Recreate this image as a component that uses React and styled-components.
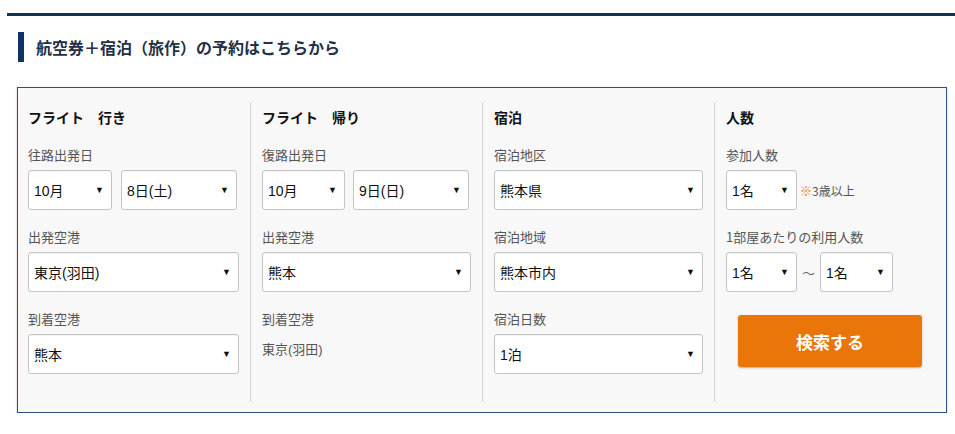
import React from "react";
import styled, { createGlobalStyle } from "styled-components";

const Global = createGlobalStyle`
  html, body { margin: 0; padding: 0; background: #fff; }
  body { font-family: "Liberation Sans", "Noto Sans CJK JP", sans-serif; color: #222; }
`;

const Page = styled.div`
  width: 955px;
  padding-top: 13px;
`;

const TopBar = styled.div`
  margin-left: 7px;
  height: 3px;
  background: #0e3466;
`;

const Heading = styled.h2`
  margin: 16px 0 0 18px;
  border-left: 6px solid #0e3466;
  padding-left: 12px;
  height: 30px;
  line-height: 30px;
  font-size: 16px;
  font-weight: bold;
  color: #233046;
  font-family: "Noto Sans CJK JP", sans-serif;
`;

const Panel = styled.div`
  margin: 25px 0 0 17px;
  width: 928px;
  border: 1px solid #2d5081;
  background: #f8f8f8;
  padding: 14px 0 10px;
  box-shadow: 0 1px 2px rgba(0, 0, 0, 0.25);
  display: grid;
  grid-template-columns: repeat(4, 232px);
`;

const Column = styled.div`
  padding: 6px 11px 28px ${(p) => (p.$first ? "10px" : "11px")};
  border-left: ${(p) => (p.$first ? "none" : "1px solid #d3d3d3")};
  display: flex;
  flex-direction: column;
`;

const Title = styled.div`
  font-family: "Noto Sans CJK JP", sans-serif;
  font-size: 14px;
  font-weight: bold;
  line-height: 18px;
  color: #111;
  margin-bottom: 20px;
`;

const Label = styled.div`
  font-family: "Noto Sans CJK JP", sans-serif;
  font-size: 13px;
  line-height: 18px;
  color: #555;
  margin-bottom: 6px;
  margin-top: ${(p) => (p.$gap ? "18px" : "0")};
`;

const Row = styled.div`
  display: flex;
  align-items: center;
  gap: ${(p) => p.$gap || "9px"};
`;

const Select = styled.div`
  box-sizing: border-box;
  width: ${(p) => p.$w || "100%"};
  height: 40px;
  border: 1px solid #c4c4c4;
  border-radius: 3px;
  background: #fff;
  box-shadow: inset 0 1px 1px rgba(0, 0, 0, 0.04);
  display: flex;
  align-items: center;
  justify-content: space-between;
  padding: 0 7px 0 5px;
  font-family: "Liberation Sans", "Noto Sans CJK JP", sans-serif;
  font-size: 14px;
  color: #111;
`;

const Arrow = styled.span`
  font-size: 9px;
  color: #111;
  line-height: 1;
`;

const Note = styled.span`
  font-family: "Noto Sans CJK JP", sans-serif;
  font-size: 12px;
  color: #555;
  margin-left: -6px;
  & > em { font-style: normal; color: #e8790f; }
`;

const Tilde = styled.span`
  font-size: 13px;
  color: #666;
  font-family: "Noto Sans CJK JP", sans-serif;
`;

const Static = styled.div`
  font-family: "Liberation Sans", "Noto Sans CJK JP", sans-serif;
  font-size: 13px;
  line-height: 18px;
  color: #555;
  margin-top: 7px;
`;

const SearchButton = styled.button`
  margin: 23px 0 0 12px;
  width: 184px;
  height: 52px;
  border: none;
  border-radius: 3px;
  background: #ea760a;
  color: #fff;
  font-family: "Noto Sans CJK JP", sans-serif;
  font-size: 17px;
  font-weight: bold;
  box-shadow: 0 1px 2px rgba(0, 0, 0, 0.3);
  cursor: pointer;
`;

const Sel = ({ w, children }) => (
  <Select $w={w}>
    <span>{children}</span>
    <Arrow>▼</Arrow>
  </Select>
);

export default function App() {
  return (
    <Page>
      <Global />
      <TopBar />
      <Heading>航空券＋宿泊（旅作）の予約はこちらから</Heading>
      <Panel>
        <Column $first>
          <Title>フライト　行き</Title>
          <Label>往路出発日</Label>
          <Row>
            <Sel w="84px">10月</Sel>
            <Sel w="116px">8日(土)</Sel>
          </Row>
          <Label $gap>出発空港</Label>
          <Sel>東京(羽田)</Sel>
          <Label $gap>到着空港</Label>
          <Sel>熊本</Sel>
        </Column>
        <Column>
          <Title>フライト　帰り</Title>
          <Label>復路出発日</Label>
          <Row $gap="8px">
            <Sel w="83px">10月</Sel>
            <Sel w="116px">9日(日)</Sel>
          </Row>
          <Label $gap>出発空港</Label>
          <Sel>熊本</Sel>
          <Label $gap>到着空港</Label>
          <Static>東京(羽田)</Static>
        </Column>
        <Column>
          <Title>宿泊</Title>
          <Label>宿泊地区</Label>
          <Sel>熊本県</Sel>
          <Label $gap>宿泊地域</Label>
          <Sel>熊本市内</Sel>
          <Label $gap>宿泊日数</Label>
          <Sel>1泊</Sel>
        </Column>
        <Column>
          <Title>人数</Title>
          <Label>参加人数</Label>
          <Row>
            <Sel w="71px">1名</Sel>
            <Note><em>※</em>3歳以上</Note>
          </Row>
          <Label $gap>1部屋あたりの利用人数</Label>
          <Row $gap="5px">
            <Sel w="71px">1名</Sel>
            <Tilde>～</Tilde>
            <Sel w="73px">1名</Sel>
          </Row>
          <SearchButton>検索する</SearchButton>
        </Column>
      </Panel>
    </Page>
  );
}
